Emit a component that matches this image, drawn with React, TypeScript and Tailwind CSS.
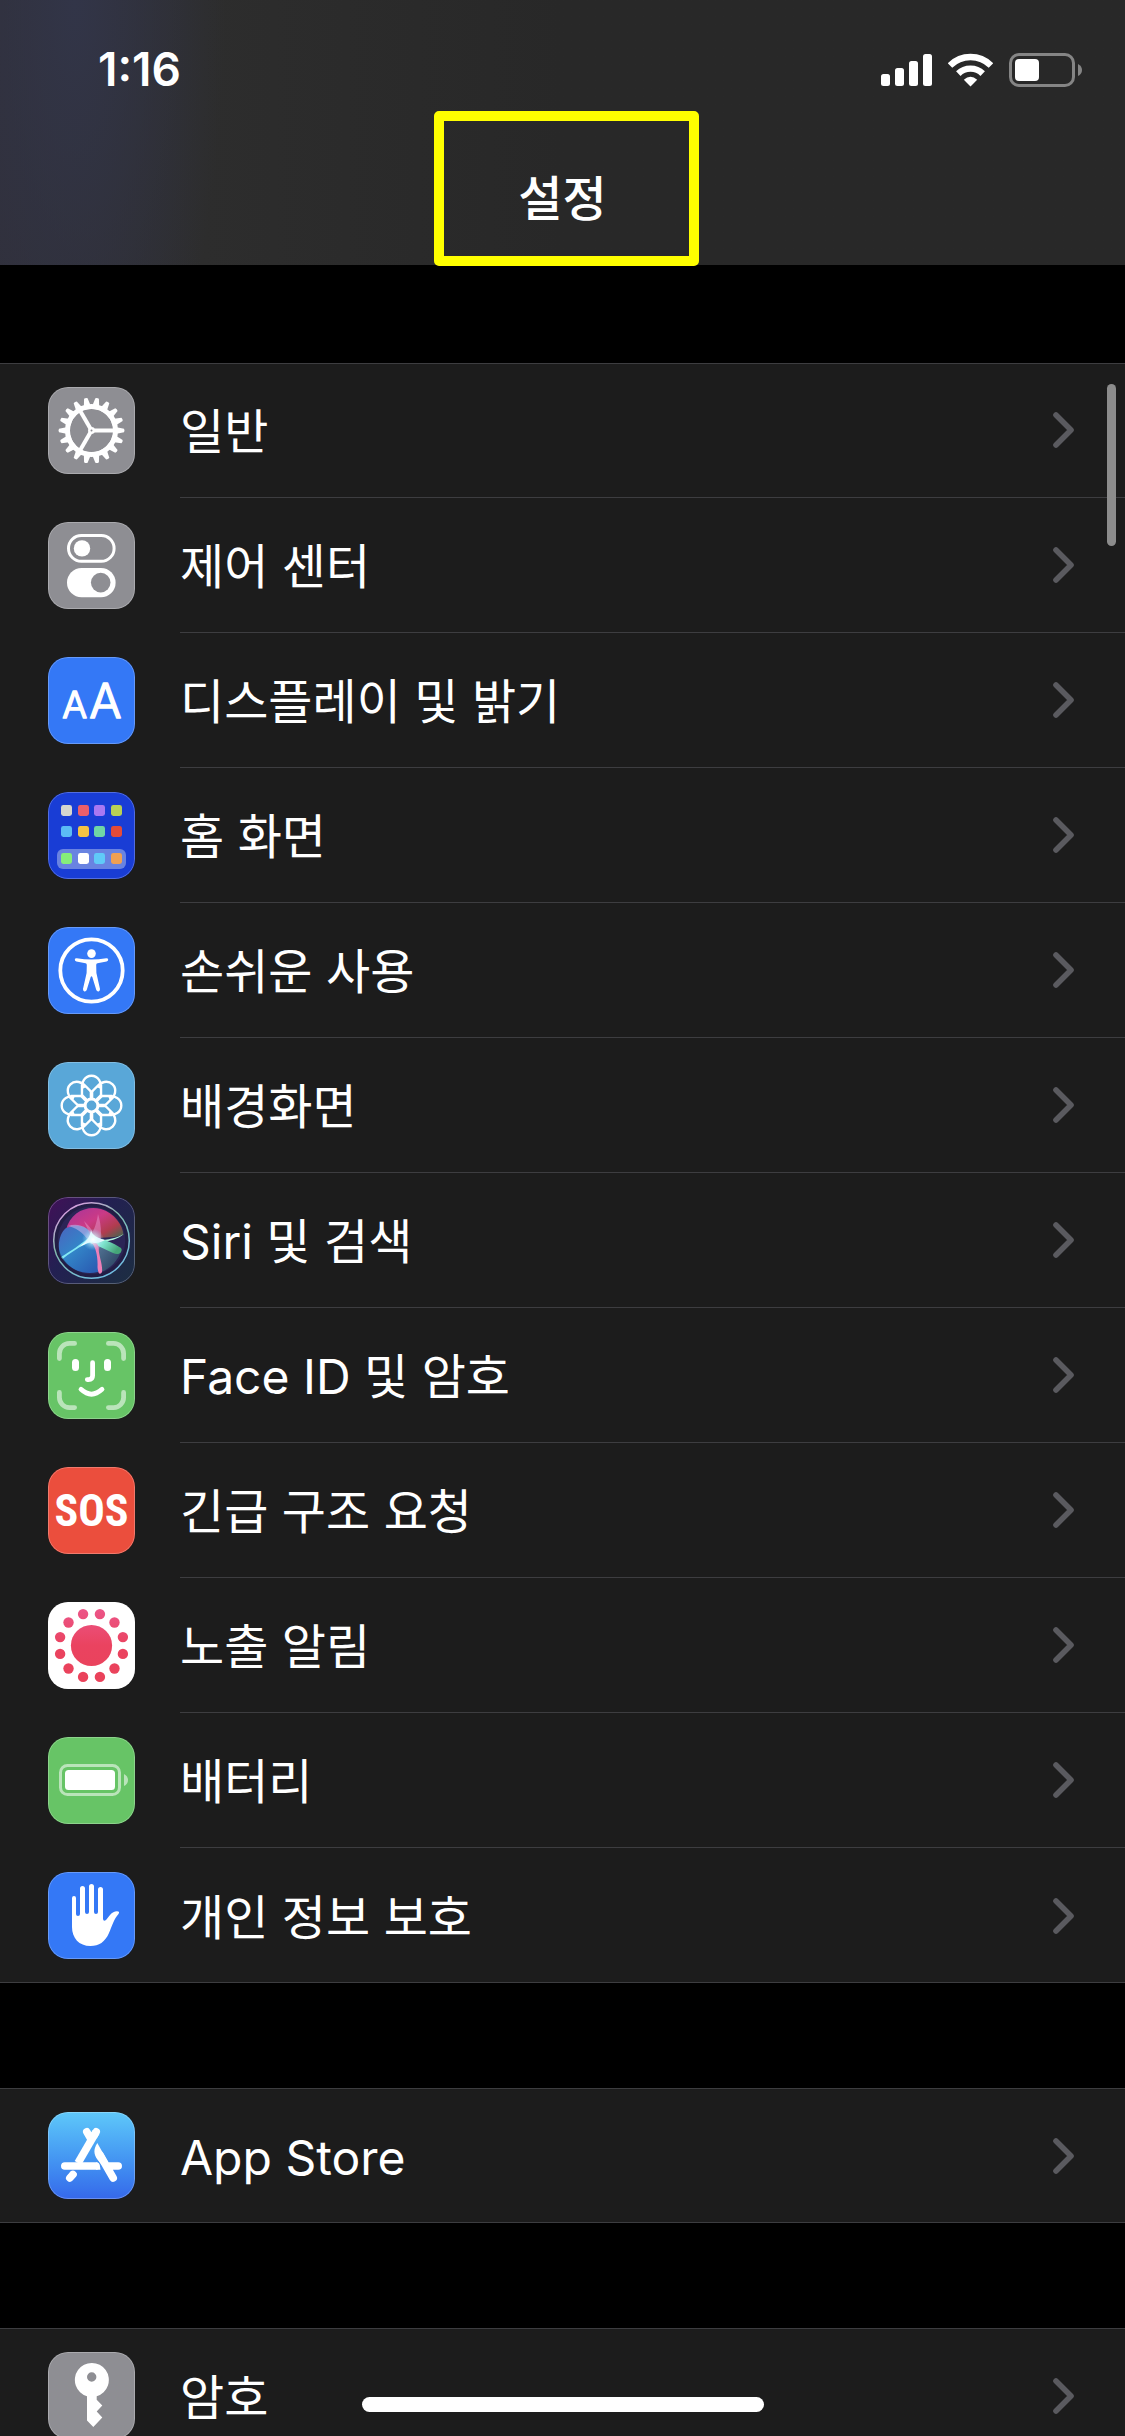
import type { ReactNode } from "react";

type Row = {
  label: string;
  tile: string;
  icon: ReactNode;
};

const range = (count: number) => Array.from({ length: count }, (_, i) => i);

const GearIcon = () => (
  <>
    {range(18).map((i) => (
      <path
        key={i}
        d="M65 39.4 L76 41.7 Q77 43.5 76 45.3 L65 47.6Z"
        fill="white"
        transform={`rotate(${i * 20} 43.5 43.5)`}
      />
    ))}
    <circle cx="43.5" cy="43.5" r="24" fill="none" stroke="white" strokeWidth="5" />
    {range(3).map((i) => (
      <path
        key={i}
        d="M44 43.5H66"
        stroke="white"
        strokeWidth="4"
        transform={`rotate(${i * 120} 43.5 43.5)`}
      />
    ))}
    <circle cx="43.5" cy="43.5" r="3.4" fill="white" />
    <circle cx="43.5" cy="43.5" r="1" fill="#8e8e93" />
  </>
);

const ControlCenterIcon = () => (
  <>
    <rect x="20.5" y="13.5" width="45.6" height="25.8" rx="12.9" fill="none" stroke="white" strokeWidth="3" />
    <circle cx="34" cy="26.4" r="8.2" fill="white" />
    <rect x="19" y="46" width="48.6" height="29.3" rx="14.6" fill="white" />
    <circle cx="52.7" cy="60.6" r="9.8" fill="#8e8e93" />
  </>
);

const DisplayIcon = () => (
  <g
    fill="white"
    stroke="white"
    strokeWidth="1.6"
    strokeLinejoin="round"
    textAnchor="middle"
    fontWeight="300"
    className="font-['Inter']"
  >
    <text x="26.6" y="61" fontSize="37">
      A
    </text>
    <text x="57.4" y="61" fontSize="48">
      A
    </text>
  </g>
);

const homeColors = [
  ["#d5d6cf", "#ec5f6a", "#a978f2", "#b9d055"],
  ["#5bbcf5", "#f6c344", "#70d6a5", "#e54b38"],
  ["#86ee7b", "#ffffff", "#60caf8", "#f0a052"],
];
const homeX = [13, 30, 46, 63];
const homeY = [13, 34, 61];

const HomeIcon = () => (
  <>
    <rect x="9" y="57" width="69" height="20" rx="6" fill="#6983e1" />
    {homeColors.map((colors, row) =>
      colors.map((color, col) => (
        <rect key={color} x={homeX[col]} y={homeY[row]} width="11" height="11" rx="2.4" fill={color} />
      ))
    )}
  </>
);

const AccessibilityIcon = () => (
  <>
    <circle cx="43.5" cy="43.5" r="31.2" fill="none" stroke="white" strokeWidth="3.8" />
    <circle cx="43.5" cy="26.6" r="4.3" fill="white" />
    <path
      d="M28.8 31.2 Q43.5 34 58.2 31.2 Q60 31 60.2 32.6 Q60.3 34.2 58.6 34.6 L49.5 36.2 Q48.2 36.5 48.2 38 L48.4 46 L52 62 Q52.2 64 50.6 64.4 Q49 64.7 48.3 63 L44.3 50 Q43.5 48.4 42.7 50 L38.7 63 Q38 64.7 36.4 64.4 Q34.8 64 35 62 L38.6 46 L38.8 38 Q38.8 36.5 37.5 36.2 L28.4 34.6 Q26.7 34.2 26.8 32.6 Q27 31 28.8 31.2Z"
      fill="white"
    />
  </>
);

const WallpaperIcon = () => (
  <>
    {range(8).map((i) => (
      <g key={i} fill="none" stroke="white" strokeWidth="2.4" transform={`rotate(${i * 45} 43.5 43.5)`}>
        <path d="M35.3 26.4A9 9 0 1 1 51.7 26.4" />
        <path d="M35.5 22L43.5 30L51.5 22" />
        <path d="M43.5 29V38" strokeWidth="3.6" />
      </g>
    ))}
    <circle cx="43.5" cy="43.5" r="6.4" fill="none" stroke="white" strokeWidth="3" />
  </>
);

const SiriIcon = () => (
  <>
    <defs>
      <linearGradient id="siri-bg" x1="0" y1="0" x2="1" y2="0.8">
        <stop offset="0" stopColor="#421058" />
        <stop offset="0.45" stopColor="#232052" />
        <stop offset="1" stopColor="#1d2c44" />
      </linearGradient>
      <linearGradient id="siri-rim" x1="0.2" y1="0" x2="0.8" y2="1">
        <stop offset="0" stopColor="#e39be6" />
        <stop offset="0.4" stopColor="#81b9ac" />
        <stop offset="1" stopColor="#6fbee8" />
      </linearGradient>
      <linearGradient id="siri-top" x1="0" y1="0" x2="1" y2="0.9">
        <stop offset="0" stopColor="#a5359c" />
        <stop offset="0.45" stopColor="#cb3a86" />
        <stop offset="0.75" stopColor="#b03c4e" />
        <stop offset="1" stopColor="#3b6a50" />
      </linearGradient>
      <linearGradient id="siri-low" x1="0" y1="0" x2="0.8" y2="1">
        <stop offset="0" stopColor="#4a64c0" />
        <stop offset="0.5" stopColor="#3385c8" />
        <stop offset="1" stopColor="#2a5fb4" />
      </linearGradient>
      <linearGradient id="siri-green" x1="0" y1="0" x2="1" y2="0.4">
        <stop offset="0" stopColor="#ffffff" />
        <stop offset="0.5" stopColor="#7fe4d0" />
        <stop offset="1" stopColor="#45a578" />
      </linearGradient>
      <linearGradient id="siri-right" x1="0" y1="0" x2="1" y2="1">
        <stop offset="0" stopColor="#6fa5c0" />
        <stop offset="1" stopColor="#1f3f55" />
      </linearGradient>
      <radialGradient id="siri-glow">
        <stop offset="0" stopColor="white" />
        <stop offset="0.35" stopColor="#d8fbff" stopOpacity="0.7" />
        <stop offset="1" stopColor="#7fd8ff" stopOpacity="0" />
      </radialGradient>
    </defs>
    <rect width="87" height="87" fill="url(#siri-bg)" />
    <circle cx="43.5" cy="43.5" r="38" fill="#2b2556" />
    <path d="M48 42L74 52C70 64 62 72 53 75Z" fill="url(#siri-right)" opacity="0.7" />
    <path d="M18 33C22 15 39 8 53 12C66 16 75 28 75.5 38C62 42 52 39 44 43C35 34 27 29 18 33Z" fill="url(#siri-top)" />
    <path d="M18 31C31 26 42 30 48 42C49 55 52 66 50 75C34 79 19 71 12 58C9 47 12 36 18 31Z" fill="url(#siri-low)" />
    <path d="M20 29C30 25 42 30 47 42L41 45C35 34 27 31 20 29Z" fill="#b3ace6" opacity="0.65" />
    <path d="M36 24C42 30 47 36 48 44L41 42C47 32 49 24 50 17C54 30 54 42 50 56Z" fill="#e285c2" opacity="0.6" />
    <path d="M50 43C60 43 69 41 75.5 37C71 42 61 44 52 46Z" fill="#b4f4de" />
    <path d="M43 40C53 41 66 46 73 51C75 55 71 59 65 56C56 52 49 48 42 46Z" fill="url(#siri-green)" />
    <path d="M46 44L50 48C51 60 55 68 54 75C52 79 50 77 49.5 70C50 60 48 51 44 46Z" fill="#ec7fb8" />
    <path d="M44 39L47 44L38 47C29 51 21 57 14.5 62L13 60C23 54 33 47 39 42Z" fill="#82e8f4" />
    <path d="M43 33C44 38 49 41 57 43C51 46 49 46 46 46C42 44 38 47 31 50C38 45 42 40 43 33Z" fill="white" />
    <circle cx="45" cy="42.5" r="11" fill="url(#siri-glow)" />
    <circle cx="43.5" cy="43.5" r="35.5" fill="none" stroke="#17122e" strokeWidth="3.5" opacity="0.4" />
    <circle cx="43.5" cy="43.5" r="37.8" fill="none" stroke="url(#siri-rim)" strokeWidth="1.5" />
  </>
);

const FaceIdIcon = () => (
  <g fill="none" stroke="white" strokeWidth="4.8" strokeLinecap="round">
    <path
      d="M11.4 26.6V21.4A10 10 0 0 1 21.4 11.4H26.6M60.4 11.4H65.6A10 10 0 0 1 75.6 21.4V26.6M75.6 60.4V65.6A10 10 0 0 1 65.6 75.6H60.4M26.6 75.6H21.4A10 10 0 0 1 11.4 65.6V60.4"
      opacity="0.55"
    />
    <path d="M44.6 30.7V43.6Q44.6 47.6 40.6 47.6H39.3M33 57.3Q43.5 67 54 57.3" />
    <path d="M27.5 30.5V35.5M59.5 30.5V35.5" strokeWidth="7" />
  </g>
);

const SosIcon = () => (
  <text
    x="43.5"
    y="59"
    fontSize="44"
    fontWeight="700"
    textAnchor="middle"
    fill="white"
    className="font-['Roboto_Condensed','Liberation_Sans_Narrow','Liberation_Sans',sans-serif]"
  >
    SOS
  </text>
);

const ExposureIcon = () => (
  <>
    <defs>
      <linearGradient id="exposure" gradientUnits="userSpaceOnUse" x1="0" y1="6" x2="0" y2="80">
        <stop offset="0" stopColor="#ec5689" />
        <stop offset="0.5" stopColor="#ea4360" />
        <stop offset="1" stopColor="#ea425a" />
      </linearGradient>
    </defs>
    <g fill="url(#exposure)">
      <circle cx="43.5" cy="43.5" r="20.6" />
      {range(12).map((i) => {
        const angle = ((i * 30 + 15) * Math.PI) / 180;
        return (
          <circle
            key={i}
            cx={43.5 + 32.5 * Math.cos(angle)}
            cy={43.5 + 32.5 * Math.sin(angle)}
            r="5.2"
          />
        );
      })}
    </g>
  </>
);

const BatteryIcon = () => (
  <>
    <rect x="12.5" y="28.5" width="59" height="29" rx="7" fill="none" stroke="white" strokeWidth="3" opacity="0.55" />
    <path d="M76 37Q80 39 80 43T76 49Z" fill="white" opacity="0.55" />
    <rect x="17" y="33" width="50" height="20" rx="3.5" fill="white" />
  </>
);

const HandIcon = () => (
  <path
    d="M24 55V26Q24 24 26 24T28 26V42Q28 44 30 44T32 42V16.5Q32 14 34.5 14T37 16.5V40Q37 42 39 42T41 40V14.5Q41 12 43.5 12T46 14.5V40Q46 42 48 42T50 40V17.5Q50 15 52.5 15T55 17.5V47Q55.5 50 58 48L62 43Q66 38.5 70.5 39.5Q71.8 40 70.5 42C66 47 64 54 61 61C57 70 51 74 42.5 74C31 74 24 66 24 55Z"
    fill="white"
  />
);

const AppStoreIcon = () => (
  <g fill="none" stroke="white" strokeWidth="7.6" strokeLinecap="round">
    <path d="M48 20L30 51" strokeLinecap="butt" />
    <path d="M48.2 19.8L46 23.6M38.8 19.8L43 27M65.2 66L52 43M16.8 54H48M60 54H70.2" />
    <path d="M49.3 31C45 38 46 42 49 47L58 58L60 50Z" fill="white" stroke="none" />
    <path d="M48 50.2Q51.8 50.2 52.5 57.8H48Z" fill="white" stroke="none" />
    <path d="M25 62.5L21.8 66" />
    <path d="M22.5 59.5Q26.5 58.5 28.6 61.5L26 66L19 65Z" fill="white" stroke="none" />
  </g>
);

const KeyIcon = () => (
  <path
    fillRule="evenodd"
    d="M39 44.2A17 17 0 1 1 48.7 44.2V47.7L54.3 53.5L48.7 59.5L54.3 65.5L45.3 75L39 68.5ZM43.7 20.3A4.7 4.7 0 1 0 43.7 29.7A4.7 4.7 0 1 0 43.7 20.3Z"
    fill="white"
  />
);

const groups: Row[][] = [
  [
    { label: "일반", tile: "bg-[#8e8e93]", icon: <GearIcon /> },
    { label: "제어 센터", tile: "bg-[#8e8e93]", icon: <ControlCenterIcon /> },
    { label: "디스플레이 및 밝기", tile: "bg-[#3478f6]", icon: <DisplayIcon /> },
    { label: "홈 화면", tile: "bg-[#193dd5]", icon: <HomeIcon /> },
    { label: "손쉬운 사용", tile: "bg-[#3478f6]", icon: <AccessibilityIcon /> },
    { label: "배경화면", tile: "bg-[#59a7d8]", icon: <WallpaperIcon /> },
    { label: "Siri 및 검색", tile: "bg-[#231a45]", icon: <SiriIcon /> },
    { label: "Face ID 및 암호", tile: "bg-[#67c466]", icon: <FaceIdIcon /> },
    { label: "긴급 구조 요청", tile: "bg-[#eb4e3d]", icon: <SosIcon /> },
    { label: "노출 알림", tile: "bg-white", icon: <ExposureIcon /> },
    { label: "배터리", tile: "bg-[#67c466]", icon: <BatteryIcon /> },
    { label: "개인 정보 보호", tile: "bg-[#3478f6]", icon: <HandIcon /> },
  ],
  [{ label: "App Store", tile: "bg-linear-to-b from-[#5fc8f9] to-[#3668ea]", icon: <AppStoreIcon /> }],
  [{ label: "암호", tile: "bg-[#8e8e93]", icon: <KeyIcon /> }],
];

const StatusIcons = () => (
  <div className="flex items-center gap-4">
    <svg className="h-[34px] w-[51px]" viewBox="0 0 51 34" fill="white">
      <rect x="0" y="21" width="9" height="12" rx="2.5" />
      <rect x="14" y="15" width="9" height="18" rx="2.5" />
      <rect x="28" y="8" width="9" height="25" rx="2.5" />
      <rect x="42" y="1" width="9" height="32" rx="2.5" />
    </svg>
    <svg className="h-[34px] w-[45px]" viewBox="0 0 45 34">
      <g fill="none" stroke="white" strokeWidth="6.4">
        <path d="M2 12.5A29 29 0 0 1 43 12.5" />
        <path d="M10.3 20.6A17.5 17.5 0 0 1 34.7 20.6" />
      </g>
      <path d="M22.5 33.5L15.8 26.8Q22.5 20.5 29.2 26.8Z" fill="white" />
    </svg>
    <svg className="h-[34px] w-[73px]" viewBox="0 0 73 34">
      <rect x="1.5" y="1.5" width="63" height="31" rx="8.5" fill="none" stroke="#858585" strokeWidth="3" />
      <rect x="6" y="6" width="24" height="22" rx="4" fill="white" />
      <path d="M69 11Q73 13 73 17T69 23Z" fill="#858585" />
    </svg>
  </div>
);

const Header = () => (
  <header className="bg-[#282828] bg-linear-to-r from-[#302f39] via-[#2d2d2d] via-18% to-[#282828] to-50%">
    <div className="bg-[radial-gradient(ellipse_150px_500px_at_75px_0px,#323548,transparent)]">
      <div className="flex h-[111px] items-end justify-between pr-[43px] pb-6 pl-[98px]">
        <time className="text-[46px] leading-[36px] font-semibold">1:16</time>
        <StatusIcons />
      </div>
      <div className="flex h-[154px] justify-center">
        <h1 className="relative pt-14 text-[48px] leading-[64px] font-medium">
          설정
          <span className="absolute inset-y-0 -right-[92px] -left-[84px] -mb-px rounded-[5px] border-10 border-[#ffff00]" />
        </h1>
      </div>
    </div>
  </header>
);

const SettingsRow = ({ label, tile, icon, last }: Row & { last: boolean }) => (
  <li>
    <a href="#" className="flex h-[135px] items-center gap-[45px] pl-12">
      <span className={`${tile} relative block size-[87px] shrink-0 overflow-hidden rounded-[20px]`}>
        <svg className="size-full" viewBox="0 0 87 87" aria-hidden="true">
          {icon}
        </svg>
        <span className="absolute inset-0 rounded-[20px] border border-white/25" />
      </span>
      <span
        className={`flex h-full flex-1 items-center justify-between pr-[51px] ${
          last ? "" : "border-b border-[#3d3d40]"
        }`}
      >
        <span className="pt-1 text-[48px] leading-[64px]">{label}</span>
        <svg className="h-[36px] w-[21px]" viewBox="0 0 21 36" aria-hidden="true">
          <path
            d="M3 3L18 18L3 33"
            fill="none"
            stroke="#5a5a5f"
            strokeWidth="5.6"
            strokeLinecap="round"
            strokeLinejoin="round"
          />
        </svg>
      </span>
    </a>
  </li>
);

export default function App() {
  return (
    <div className="relative flex h-screen flex-col overflow-hidden bg-black font-['Inter','Noto_Sans_CJK_KR',sans-serif] text-white">
      <Header />
      <main className="mt-[98px] flex flex-col gap-[105px]">
        {groups.map((rows) => (
          <ul
            key={rows[0].label}
            className="bg-[#1c1c1c] shadow-[inset_0_1px_0_#3d3d40,inset_0_-1px_0_#3d3d40]"
          >
            {rows.map((row, i) => (
              <SettingsRow key={row.label} {...row} last={i === rows.length - 1} />
            ))}
          </ul>
        ))}
      </main>

      {/* scroll indicator and home bar float over the list */}
      <div className="absolute top-96 right-[9px] h-[162px] w-[9px] rounded-full bg-[#8c8c8c]" />
      <div className="absolute bottom-6 left-1/2 h-[15px] w-[402px] -translate-x-1/2 rounded-full bg-white" />
    </div>
  );
}
